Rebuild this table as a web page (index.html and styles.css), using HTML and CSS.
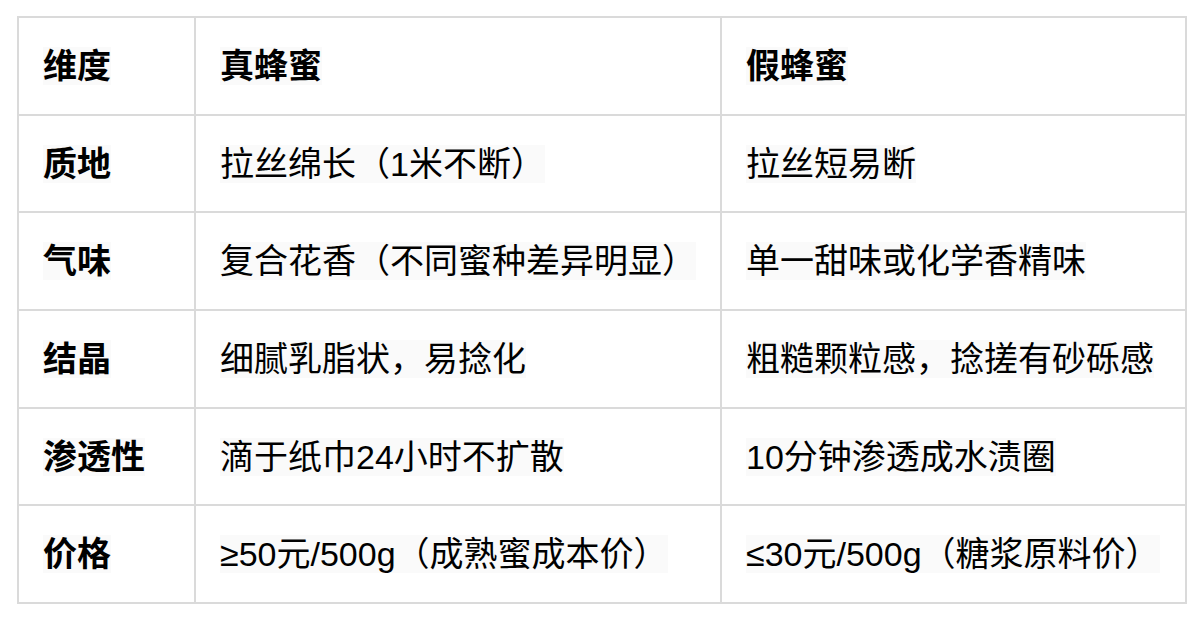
FILE: index.html
```html
<!DOCTYPE html>
<html lang="zh-CN">
<head>
<meta charset="utf-8">
<title>真假蜂蜜对比</title>
<link rel="stylesheet" href="styles.css">
</head>
<body>
<table class="compare">
  <colgroup>
    <col class="c1"><col class="c2"><col class="c3">
  </colgroup>
  <thead>
    <tr>
      <th><span class="t">维度</span></th>
      <th><span class="t">真蜂蜜</span></th>
      <th><span class="t">假蜂蜜</span></th>
    </tr>
  </thead>
  <tbody>
    <tr>
      <th><span class="t">质地</span></th>
      <td><span class="t">拉丝绵长（1米不断）</span></td>
      <td><span class="t">拉丝短易断</span></td>
    </tr>
    <tr>
      <th><span class="t">气味</span></th>
      <td><span class="t">复合花香（不同蜜种差异明显）</span></td>
      <td><span class="t">单一甜味或化学香精味</span></td>
    </tr>
    <tr>
      <th><span class="t">结晶</span></th>
      <td><span class="t">细腻乳脂状，易捻化</span></td>
      <td><span class="t">粗糙颗粒感，捻搓有砂砾感</span></td>
    </tr>
    <tr>
      <th><span class="t">渗透性</span></th>
      <td><span class="t">滴于纸巾24小时不扩散</span></td>
      <td><span class="t">10分钟渗透成水渍圈</span></td>
    </tr>
    <tr>
      <th><span class="t">价格</span></th>
      <td><span class="t">≥50元/500g（成熟蜜成本价）</span></td>
      <td><span class="t">≤30元/500g（糖浆原料价）</span></td>
    </tr>
  </tbody>
</table>
</body>
</html>
```

FILE: styles.css
```css
html, body {
  margin: 0;
  padding: 0;
  background: #ffffff;
}

body {
  padding: 16px 0 0 17px;
  font-family: "Liberation Sans", "Noto Sans CJK SC", sans-serif;
  color: #000000;
}

.compare {
  border-collapse: collapse;
  width: 1168px;
  table-layout: fixed;
}

.c1 { width: 177px; }
.c2 { width: 526px; }
.c3 { width: 465px; }

.compare th,
.compare td {
  border: 2px solid #dadada;
  height: 97.7px;
  padding: 0 24px;
  box-sizing: border-box;
  text-align: left;
  vertical-align: middle;
  font-size: 34px;
  line-height: 40px;
  white-space: nowrap;
}

.compare th {
  font-weight: 700;
}

.compare td {
  font-weight: 400;
}

.t {
  background: #fafafa;
}
```
